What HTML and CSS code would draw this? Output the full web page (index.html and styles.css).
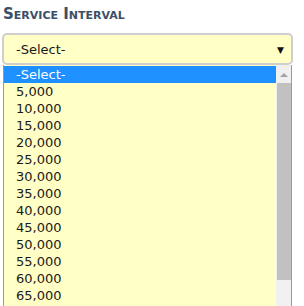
FILE: index.html
```html
<!DOCTYPE html>
<html lang="en">
<head>
    <meta charset="UTF-8">
    <meta name="viewport" content="width=device-width, initial-scale=1.0">
    <title>Service Interval</title>
    <link rel="stylesheet" href="styles.css">
</head>
<body>
    <div class="field">
        <h2 class="field-label">Service Interval</h2>

        <div class="select-box">
            <span class="select-value">-Select-</span>
            <span class="select-arrow">&#9660;</span>
        </div>

        <div class="dropdown">
            <ul class="options">
                <li class="option selected">-Select-</li>
                <li class="option">5,000</li>
                <li class="option">10,000</li>
                <li class="option">15,000</li>
                <li class="option">20,000</li>
                <li class="option">25,000</li>
                <li class="option">30,000</li>
                <li class="option">35,000</li>
                <li class="option">40,000</li>
                <li class="option">45,000</li>
                <li class="option">50,000</li>
                <li class="option">55,000</li>
                <li class="option">60,000</li>
                <li class="option">65,000</li>
            </ul>
            <div class="scrollbar">
                <div class="scroll-up"></div>
                <div class="scroll-thumb"></div>
            </div>
        </div>
    </div>
</body>
</html>
```

FILE: styles.css
```css
body {
    margin: 0;
    padding: 0;
    background: #fff;
    font-family: "DejaVu Sans", Verdana, sans-serif;
    overflow: hidden;
}
.field {
    padding: 5px 0 0 2px;
    width: 291px;
}
.field-label {
    margin: 0 0 10px 1px;
    font-family: "DejaVu Sans", sans-serif;
    font-size: 15px;
    font-weight: bold;
    font-variant: small-caps;
    color: #3a4f66;
    line-height: 18px;
}
.select-box {
    display: flex;
    align-items: center;
    justify-content: space-between;
    height: 28px;
    border: 2px solid #cfcfcf;
    border-radius: 5px;
    background: #ffffc6;
    padding: 0 7px 0 12px;
}
.select-value {
    font-size: 13px;
    color: #1a1a1a;
}
.select-arrow {
    font-size: 9px;
    color: #111;
    padding-top: 2px;
}
.dropdown {
    display: flex;
    margin-left: 1px;
    width: 287px;
    border-left: 1px solid #7b9cd8;
    border-right: 1px solid #7b9cd8;
    background: #ffffc6;
    height: 260px;
}
.options {
    list-style: none;
    margin: 0;
    padding: 1px 0 0;
    flex: 1;
}
.option {
    height: 17px;
    line-height: 17px;
    padding-left: 12px;
    font-size: 13px;
    color: #1a1a1a;
}
.option.selected {
    background: #1e90ff;
    color: #fff;
}
.scrollbar {
    width: 15px;
    background: #f0f0f0;
    display: flex;
    flex-direction: column;
    align-items: center;
}
.scroll-up {
    width: 0;
    height: 0;
    margin: 8px 0 6px;
    border-left: 4px solid transparent;
    border-right: 4px solid transparent;
    border-bottom: 4px solid #a3a3a3;
}
.scroll-thumb {
    width: 14px;
    height: 197px;
    background: #c1c1c1;
}
```
